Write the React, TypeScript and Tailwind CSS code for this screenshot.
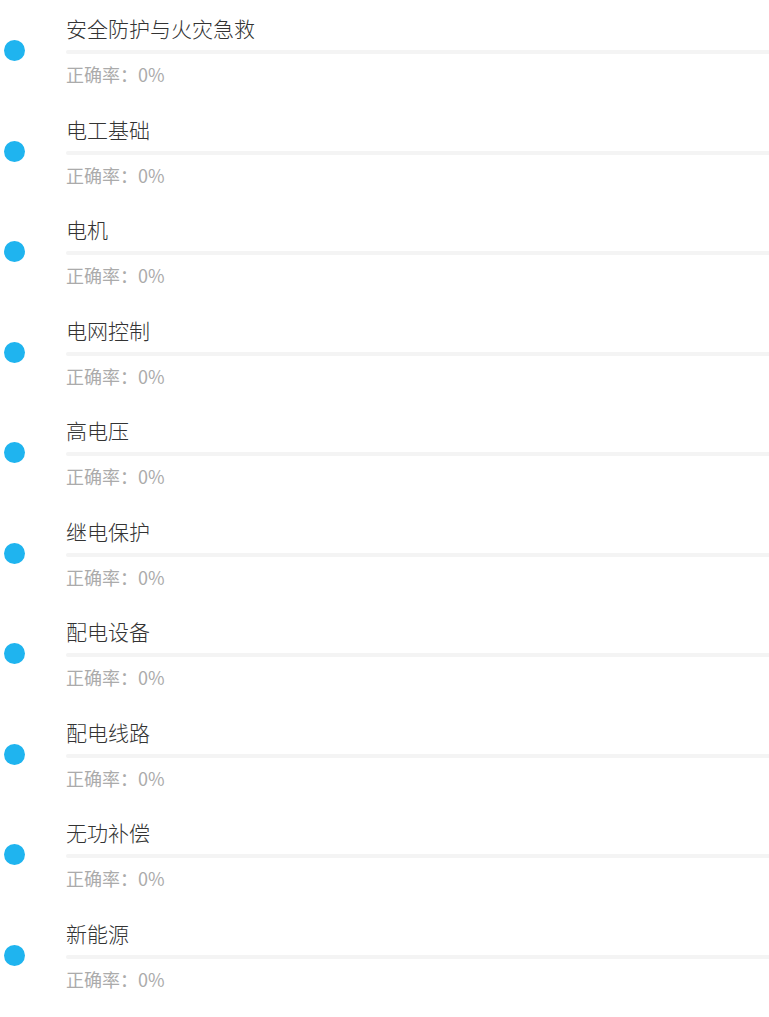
import React from 'react'

const subjects = [
  '安全防护与火灾急救',
  '电工基础',
  '电机',
  '电网控制',
  '高电压',
  '继电保护',
  '配电设备',
  '配电线路',
  '无功补偿',
  '新能源',
]

const SubjectRow: React.FC<{ name: string; rate: number }> = ({ name, rate }) => (
  <div className="flex h-[100.5px] items-start">
    {/* progress dot */}
    <div className="ml-[4px] mt-[40px] h-[21px] w-[21px] shrink-0 rounded-full bg-[#1fb4ef]" />
    <div className="ml-[41px] flex flex-1 flex-col pt-[13px]">
      <div className="text-[21px] font-light leading-[30px] text-[#333333]">{name}</div>
      <div className="mt-[7px] h-[4px] w-full rounded-l-full bg-[#f4f4f4]">
        <div className="h-full rounded-full bg-[#1fb4ef]" style={{ width: `${rate}%` }} />
      </div>
      <div className="mt-[8px] text-[18px] leading-[24px] text-[#ababab]">
        正确率：{rate}%
      </div>
    </div>
  </div>
)

export default function App() {
  return (
    <div
      className="min-h-[1017px] w-full bg-white"
      style={{ fontFamily: '"Noto Sans CJK SC", "Noto Sans", sans-serif' }}
    >
      {subjects.map((s) => (
        <SubjectRow key={s} name={s} rate={0} />
      ))}
    </div>
  )
}
